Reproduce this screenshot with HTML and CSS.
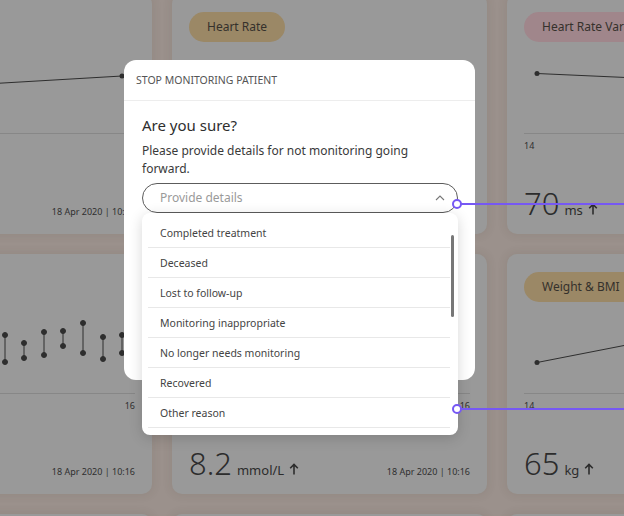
FILE: index.html
```html
<!DOCTYPE html>
<html lang="en">
<head>
<meta charset="utf-8">
<title>Stop monitoring patient</title>
<link rel="stylesheet" href="styles.css">
</head>
<body>
<svg width="0" height="0" class="defs" aria-hidden="true">
  <symbol id="arrow-up" viewBox="0 0 10 12">
    <path d="M5 11.5V1.5M1.2 5.3L5 1.5l3.8 3.8" fill="none" stroke="#2c2c2c" stroke-width="1.6"/>
  </symbol>
</svg>
<div class="dashboard">
  <!-- Row 1 -->
  <section class="card">
    <span class="chip chip-gold">Blood Pressure</span>
    <div class="chart">
      <svg class="plot" viewBox="0 0 281 92" width="281" height="92">
        <polyline points="13,49 268,34" fill="none" stroke="#2e2e2e" stroke-width="1"/>
        <circle cx="268" cy="34" r="2.5" fill="#2e2e2e"/>
      </svg>
    </div>
    <div class="axis"><span>14</span><span>16</span></div>
    <div class="reading"><span class="value"><b>120</b><i>mmHg</i><svg class="trend"><use href="#arrow-up"/></svg></span><span class="date">18 Apr 2020 | 10:16</span></div>
  </section>
  <section class="card">
    <span class="chip chip-gold">Heart Rate</span>
    <div class="chart"></div>
    <div class="axis"><span>14</span><span>16</span></div>
    <div class="reading"><span class="value"><b>72</b><i>bpm</i><svg class="trend"><use href="#arrow-up"/></svg></span><span class="date">18 Apr 2020 | 10:16</span></div>
  </section>
  <section class="card">
    <span class="chip chip-pink">Heart Rate Variability</span>
    <div class="chart">
      <svg class="plot" viewBox="0 0 281 92" width="281" height="92">
        <polyline points="13,31.5 268,43" fill="none" stroke="#2e2e2e" stroke-width="1"/>
        <circle cx="13" cy="31.5" r="2.5" fill="#2e2e2e"/>
      </svg>
    </div>
    <div class="axis"><span>14</span><span>16</span></div>
    <div class="reading"><span class="value"><b>70</b><i>ms</i><svg class="trend"><use href="#arrow-up"/></svg></span><span class="date">18 Apr 2020 | 10:16</span></div>
  </section>

  <!-- Row 2 -->
  <section class="card">
    <span class="chip chip-gold">Blood Glucose</span>
    <div class="chart">
      <svg class="plot" viewBox="0 0 281 92" width="281" height="92" stroke="#2e2e2e" fill="#2e2e2e">
        <line x1="131.5" y1="30" x2="131.5" y2="52"/><circle cx="131.5" cy="30" r="2.5"/><circle cx="131.5" cy="52" r="2.5"/>
        <line x1="151" y1="33" x2="151" y2="60"/><circle cx="151" cy="33" r="2.5"/><circle cx="151" cy="60" r="2.5"/>
        <line x1="170" y1="41" x2="170" y2="56"/><circle cx="170" cy="41" r="2.5"/><circle cx="170" cy="56" r="2.5"/>
        <line x1="190" y1="30" x2="190" y2="53"/><circle cx="190" cy="30" r="2.5"/><circle cx="190" cy="53" r="2.5"/>
        <line x1="209" y1="29" x2="209" y2="44"/><circle cx="209" cy="29" r="2.5"/><circle cx="209" cy="44" r="2.5"/>
        <line x1="229" y1="21" x2="229" y2="51"/><circle cx="229" cy="21" r="2.5"/><circle cx="229" cy="51" r="2.5"/>
        <line x1="249" y1="35" x2="249" y2="57"/><circle cx="249" cy="35" r="2.5"/><circle cx="249" cy="57" r="2.5"/>
        <line x1="268" y1="33" x2="268" y2="51"/><circle cx="268" cy="33" r="2.5"/><circle cx="268" cy="51" r="2.5"/>
      </svg>
    </div>
    <div class="axis"><span>14</span><span>16</span></div>
    <div class="reading"><span class="value"><b>6.1</b><i>mmol/L</i><svg class="trend"><use href="#arrow-up"/></svg></span><span class="date">18 Apr 2020 | 10:16</span></div>
  </section>
  <section class="card">
    <span class="chip chip-gold">Blood Ketones</span>
    <div class="chart"></div>
    <div class="axis"><span>14</span><span>16</span></div>
    <div class="reading"><span class="value"><b>8.2</b><i>mmol/L</i><svg class="trend"><use href="#arrow-up"/></svg></span><span class="date">18 Apr 2020 | 10:16</span></div>
  </section>
  <section class="card">
    <span class="chip chip-gold">Weight &amp; BMI</span>
    <div class="chart">
      <svg class="plot" viewBox="0 0 281 92" width="281" height="92">
        <polyline points="13,60.5 268,10.7" fill="none" stroke="#2e2e2e" stroke-width="1"/>
        <circle cx="13" cy="60.5" r="2.5" fill="#2e2e2e"/>
      </svg>
    </div>
    <div class="axis"><span>14</span><span>16</span></div>
    <div class="reading"><span class="value"><b>65</b><i>kg</i><svg class="trend"><use href="#arrow-up"/></svg></span><span class="date">18 Apr 2020 | 10:16</span></div>
  </section>

  <!-- Row 3 -->
  <section class="card"></section>
  <section class="card"></section>
  <section class="card"></section>
</div>

<div class="modal" role="dialog" aria-labelledby="modal-title">
  <header class="modal-header">STOP MONITORING PATIENT</header>
  <div class="modal-body">
    <h2 id="modal-title" class="modal-title">Are you sure?</h2>
    <p class="modal-text">Please provide details for not monitoring going forward.</p>
    <div class="select">
      <div class="select-field">
        <span class="placeholder">Provide details</span>
        <svg class="chevron" width="10" height="6" viewBox="0 0 10 6"><polyline points="1,5 5,1 9,5" fill="none" stroke="#777" stroke-width="1.1"/></svg>
      </div>
      <ul class="menu">
        <li>Completed treatment</li>
        <li>Deceased</li>
        <li>Lost to follow-up</li>
        <li>Monitoring inappropriate</li>
        <li>No longer needs monitoring</li>
        <li>Recovered</li>
        <li>Other reason</li>
        <span class="scrollbar"></span>
      </ul>
    </div>
  </div>
</div>

<div class="hotspot hotspot-a"><span class="dot"></span></div>
<div class="hotspot hotspot-b"><span class="dot"></span></div>
</body>
</html>
```
FILE: styles.css
```css
* { box-sizing: border-box; }

html, body {
  margin: 0;
  height: 100%;
}

body {
  overflow: hidden;
  background: #9b918c;
  font-family: "Noto Sans", "Open Sans", sans-serif;
  color: #333;
  position: relative;
}

.defs { position: absolute; }

/* dimmed dashboard behind the dialog */
.dashboard {
  display: grid;
  grid-template-columns: repeat(3, 315px);
  grid-auto-rows: 240px;
  gap: 20px;
  margin: -6px 0 0 -163px;
  width: max-content;
}

.card {
  background: #999999;
  border-radius: 10px;
  box-shadow: 0 0 8px 2px rgba(60, 45, 40, 0.08);
  padding: 18px 17px 0;
  display: flex;
  flex-direction: column;
  overflow: hidden;
}

.chip {
  align-self: flex-start;
  height: 30px;
  line-height: 30px;
  padding: 0 18px;
  border-radius: 15px;
  font-size: 12px;
  color: #35312c;
  white-space: nowrap;
}
.chip-gold { background: #9b8866; }
.chip-pink { background: #a0868b; }

.chart {
  height: 92px;
  border-bottom: 1px solid #878787;
}
.plot { display: block; }

.axis {
  display: flex;
  justify-content: space-between;
  margin-top: 6px;
  font-size: 9px;
  line-height: 12px;
  color: #2f2f2f;
}

.reading {
  margin-top: auto;
  padding-bottom: 4px;
  display: flex;
  align-items: baseline;
  justify-content: space-between;
  line-height: 36px;
}
.value b {
  font-weight: 300;
  font-size: 31px;
  color: #2c2c2c;
}
.value i {
  font-style: normal;
  font-size: 13px;
  margin-left: 5px;
  color: #2c2c2c;
}
.trend {
  width: 10px;
  height: 12px;
  margin-left: 5px;
}
.date {
  font-size: 9px;
  color: #2f2f2f;
}

/* dialog */
.modal {
  position: absolute;
  left: 124px;
  top: 60px;
  width: 351px;
  height: 320px;
  background: #fff;
  border-radius: 12px;
}

.modal-header {
  height: 41px;
  padding: 0 12px;
  line-height: 40px;
  font-size: 10.5px;
  color: #555;
  border-bottom: 1px solid #ededed;
}

.modal-body {
  padding: 14px 17px 0 18px;
}

.modal-title {
  margin: 0;
  font-size: 15px;
  font-weight: 400;
  line-height: 20px;
  color: #2e2e2e;
}

.modal-text {
  margin: 7px 0 5px;
  font-size: 12px;
  line-height: 18px;
  color: #3a3a3a;
}

.select {
  position: relative;
}

.select-field {
  height: 30px;
  border: 1px solid #5c5c5c;
  border-radius: 15px;
  display: flex;
  align-items: center;
  justify-content: space-between;
  padding: 0 12px 0 17px;
}

.placeholder {
  font-size: 12px;
  color: #9a9a9a;
  margin-top: -1px;
}
.chevron { display: block; }

.menu {
  position: absolute;
  left: 0;
  top: 30px;
  width: 316px;
  margin: 0;
  padding: 5px 8px 7px 6px;
  list-style: none;
  background: #fff;
  border-radius: 8px;
  box-shadow: 0 3px 14px rgba(0, 0, 0, 0.16);
}
.menu li {
  height: 30px;
  line-height: 31px;
  padding-left: 12px;
  font-size: 10.5px;
  color: #444;
  border-bottom: 1px solid #e8e8e8;
}
.scrollbar {
  position: absolute;
  right: 4px;
  top: 22px;
  width: 3px;
  height: 82px;
  border-radius: 2px;
  background: #777;
}

/* annotation hotspots */
.hotspot {
  position: absolute;
  left: 457px;
  right: 0;
  height: 2px;
  background: #7658f4;
}
.hotspot-a { top: 203px; }
.hotspot-b { top: 408px; }
.hotspot .dot {
  position: absolute;
  left: -5px;
  top: -4px;
  width: 10px;
  height: 10px;
  border-radius: 50%;
  border: 2px solid #7658f4;
  background: #fff;
}
```
